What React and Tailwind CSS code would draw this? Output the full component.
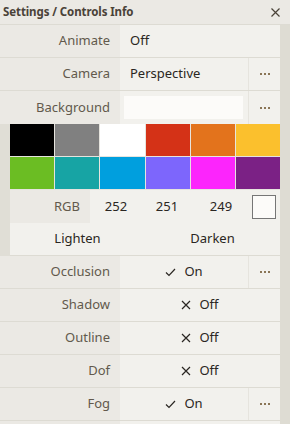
import React from 'react'

const swatches = [
  '#000000', '#808080', '#ffffff', '#d43217', '#e3731c', '#fbc02d',
  '#6bbd23', '#17a4a4', '#009fde', '#7d66fc', '#fc25fc', '#7b2185',
]

function Dots() {
  return (
    <div className="w-[32px] h-full flex items-center justify-center gap-[2px] border-l border-[#e6e4de]">
      <span className="w-[2px] h-[2px] bg-[#8a7556]" />
      <span className="w-[2px] h-[2px] bg-[#8a7556]" />
      <span className="w-[2px] h-[2px] bg-[#8a7556]" />
    </div>
  )
}

function Row({ label, children, dots, center }) {
  return (
    <div className="flex h-[33px] border-b border-[#dddbd3]">
      <div className="w-[120px] shrink-0 bg-[#ebe9e4] flex items-center justify-end pr-[10px] text-[#62594c]">{label}</div>
      <div className="flex-1 flex bg-[#f2f1ed]">
        <div className={`flex-1 flex items-center ${center ? 'justify-center' : 'pl-[10px]'} text-[#2a2622]`}>{children}</div>
        {dots && <Dots />}
      </div>
    </div>
  )
}

function Toggle({ on }) {
  return on ? (
    <span className="flex items-center gap-[8px]">
      <svg width="11" height="9" viewBox="0 0 11 9" fill="none"><path d="M1 4.5 L4 7.5 L10 1" stroke="#2a2622" strokeWidth="1.2" /></svg>
      <span>On</span>
    </span>
  ) : (
    <span className="flex items-center gap-[8px]">
      <svg width="10" height="10" viewBox="0 0 10 10" fill="none"><path d="M1 1 L9 9 M9 1 L1 9" stroke="#2a2622" strokeWidth="1.2" /></svg>
      <span>Off</span>
    </span>
  )
}

export default function App() {
  return (
    <div className="w-[290px] h-[424px] overflow-hidden bg-[#dedcd3] text-[13px]" style={{ fontFamily: '"Noto Sans", sans-serif' }}>
      <div className="h-[25px] flex items-center justify-between bg-[#ebe9e4] border-b border-[#dddbd3] pl-[3px] pr-[10px]">
        <span className="font-bold text-[11.5px] tracking-[-0.1px] text-[#4a4238]">Settings / Controls Info</span>
        <svg width="9" height="9" viewBox="0 0 9 9"><path d="M0.5 0.5 L8.5 8.5 M8.5 0.5 L0.5 8.5" stroke="#4a4238" strokeWidth="1.2" /></svg>
      </div>
      <div className="w-[280px]">
        <Row label="Animate">Off</Row>
        <Row label="Camera" dots>Perspective</Row>
        <div className="flex h-[33px]">
          <div className="w-[120px] shrink-0 bg-[#ebe9e4] flex items-center justify-end pr-[10px] text-[#62594c]">Background</div>
          <div className="flex-1 flex bg-[#f2f1ed]">
            <div className="flex-1 flex items-center pl-[4px] pr-[5px]">
              <div className="h-[23px] w-full bg-[#fcfbf9]" />
            </div>
            <Dots />
          </div>
        </div>
        <div className="pl-[10px] bg-[#e0ded6]">
          <div className="grid grid-cols-6 gap-[1px] bg-[#e6e4de]">
            {swatches.map((c) => (
              <div key={c} className="h-[32px]" style={{ backgroundColor: c }} />
            ))}
          </div>
          <div className="flex h-[34px] bg-[#f2f1ed] items-center text-[#2a2622] border-t border-[#e6e4de]">
            <div className="w-[80px] shrink-0 h-full bg-[#ebe9e4] flex items-center justify-end pr-[10px] text-[#62594c]">RGB</div>
            <div className="w-[52px] shrink-0 flex justify-center">252</div>
            <div className="w-[50px] shrink-0 flex justify-center">251</div>
            <div className="w-[58px] shrink-0 flex justify-center">249</div>
            <div className="ml-[2px] w-[24px] h-[24px] shrink-0 border border-[#767676] bg-[#fcfbf9]" />
          </div>
          <div className="grid grid-cols-2 h-[33px] bg-[#f2f1ed] text-[#2a2622] border-b border-[#dddbd3]">
            <div className="flex items-center justify-center">Lighten</div>
            <div className="flex items-center justify-center">Darken</div>
          </div>
        </div>
        <Row label="Occlusion" dots center><Toggle on /></Row>
        <Row label="Shadow" center><Toggle /></Row>
        <Row label="Outline" center><Toggle /></Row>
        <Row label="Dof" center><Toggle /></Row>
        <Row label="Fog" dots center><Toggle on /></Row>
        <Row label="" center />
      </div>
    </div>
  )
}
